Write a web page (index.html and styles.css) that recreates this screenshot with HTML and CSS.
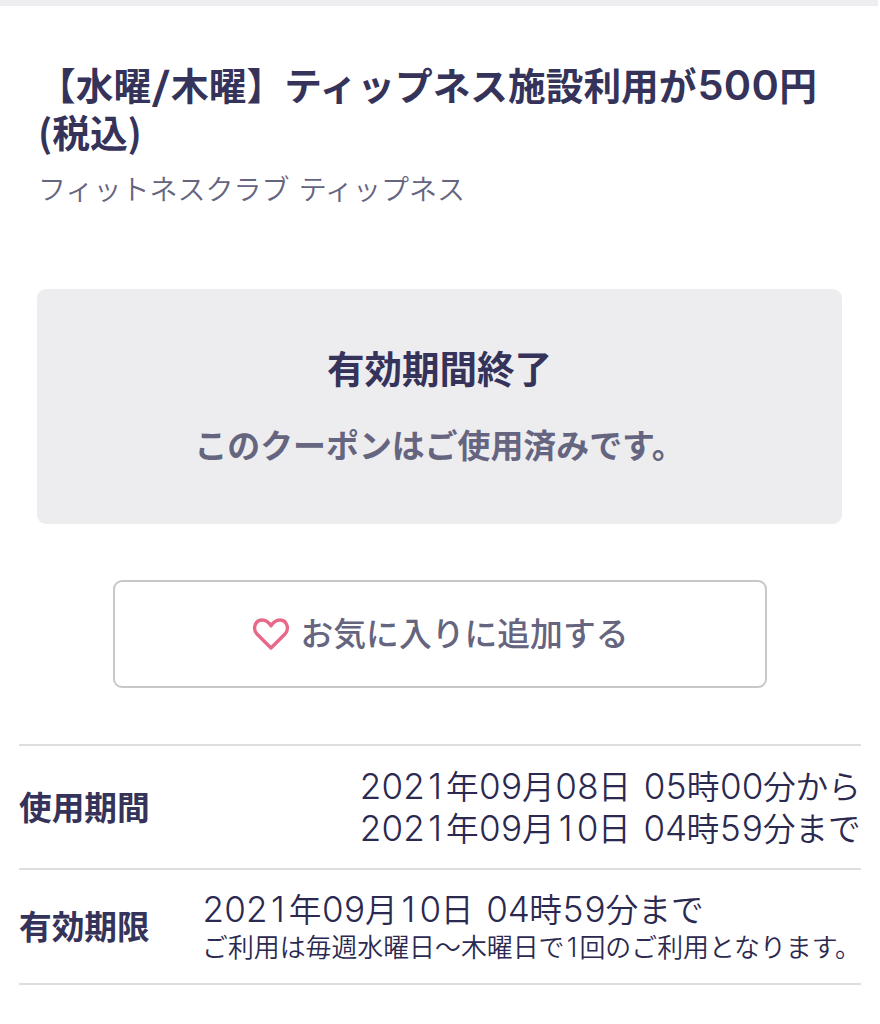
FILE: index.html
```html
<!DOCTYPE html>
<html lang="ja">
<head>
<meta charset="utf-8">
<title>クーポン</title>
<link rel="stylesheet" href="styles.css">
</head>
<body>
<main class="page">
  <header class="heading">
    <h1 class="title"><span class="line">【水曜<span class="slash">/</span>木曜】ティップネス施設利用が<span class="num">500</span>円</span><span class="line">(税込)</span></h1>
    <p class="shop"><span class="line">フィットネスクラブ ティップネス</span></p>
  </header>
  <section class="status">
    <h2 class="status-title"><span class="line">有効期間終了</span></h2>
    <p class="status-text"><span class="line">このクーポンはご使用済みです。</span></p>
  </section>
  <button class="favorite" type="button">
    <svg class="heart" viewBox="0 0 38 34" width="38" height="34"><path d="M19 31 L5.200 17.200 C2.600 14.600 2.300 11.500 2.800 9.200 C3.800 5.200 6.800 3 10.300 3 C14 3 16.500 5 19 8.800 C21.500 5 24 3 27.700 3 C31.200 3 34.200 5.200 35.200 9.200 C35.700 11.500 35.400 14.600 32.800 17.200 Z"/></svg>
    <span class="line">お気に入りに追加する</span>
  </button>
  <dl class="details">
    <div class="row period">
      <dt class="label">使用期間</dt>
      <dd class="value"><span class="line date"><span class="n">202<span class="one">1</span></span>年<span class="n">09</span>月<span class="n">08</span>日 <span class="n">05</span>時<span class="n">00</span>分から</span><span class="line date"><span class="n">202<span class="one">1</span></span>年<span class="n">09</span>月<span class="n"><span class="one">1</span>0</span>日 <span class="n">04</span>時<span class="n">59</span>分まで</span></dd>
    </div>
    <div class="row limit">
      <dt class="label">有効期限</dt>
      <dd class="value"><span class="line date"><span class="n">202<span class="one">1</span></span>年<span class="n">09</span>月<span class="n"><span class="one">1</span>0</span>日 <span class="n">04</span>時<span class="n">59</span>分まで</span><span class="line note">ご利用は毎週水曜日〜木曜日で<span class="note-one">1</span>回のご利用となります。</span></dd>
    </div>
  </dl>
</main>
</body>
</html>
```
FILE: styles.css
```css
* { box-sizing: border-box; margin: 0; padding: 0; }
body { background: #fff; color: #35335a; font-family: "Noto Sans CJK JP", sans-serif; }
.page { width: 878px; height: 1024px; border-top: 6px solid #eeeef0; overflow: hidden; }
.line { display: block; white-space: nowrap; width: max-content; }
.heading { padding: 54px 38px 0; height: 283px; }
.title { font-size: 37.700px; line-height: 47px; font-weight: 700; }
.num { font: 600 41.500px/40px Inter, sans-serif; letter-spacing: 0.300px; margin-left: 1px; }
.slash { display: inline-block; width: 20px; text-align: center; transform: scaleX(1.350); }
.shop { margin-top: 18px; font-size: 28px; line-height: 32px; font-weight: 350; color: #66657f; word-spacing: 3px; }
.status { width: 805px; height: 235px; margin-left: 37px; padding-top: 52px; border-radius: 9px; background: #ededf0; display: flex; flex-direction: column; align-items: center; }
.status-title { font-size: 37.500px; line-height: 52px; font-weight: 700; }
.status-text { margin-top: 27px; font-size: 32.900px; line-height: 48px; font-weight: 700; color: #66657f; }
.favorite { width: 654px; height: 108px; margin: 56px 0 0 113px; padding-bottom: 5px; border: 2px solid #c8c8c8; border-radius: 9px; background: #fff; display: flex; align-items: center; justify-content: center; gap: 11px; color: #66657f; font: 500 32.800px/48px "Noto Sans CJK JP", sans-serif; }
.heart { fill: none; stroke: #e8688a; stroke-width: 3.400; stroke-linejoin: round; margin-top: 5px; }
.details { width: 842px; margin: 56px 0 0 19px; border-top: 2px solid #dedede; }
.row { display: flex; align-items: center; border-bottom: 2px solid #dedede; padding-bottom: 3px; }
.period { height: 124px; justify-content: space-between; }
.limit { height: 115px; }
.label { width: 183px; flex: none; font-size: 32.700px; line-height: 42px; font-weight: 700; }
.value { line-height: 42px; color: #2b2950; }
.date { font-size: 32.700px; font-weight: 350; word-spacing: 5px; }
.n { font: 300 35px/40px Inter, sans-serif; font-feature-settings: "tnum"; letter-spacing: -0.900px; }
.one { display: inline-block; width: 21.500px; text-align: center; letter-spacing: 0; font-feature-settings: normal; }
.note { font-size: 25.900px; line-height: 34px; font-weight: 350; }
.note-one { display: inline-block; width: 15px; text-align: center; font: 300 27px/30px Inter, sans-serif; }
```
